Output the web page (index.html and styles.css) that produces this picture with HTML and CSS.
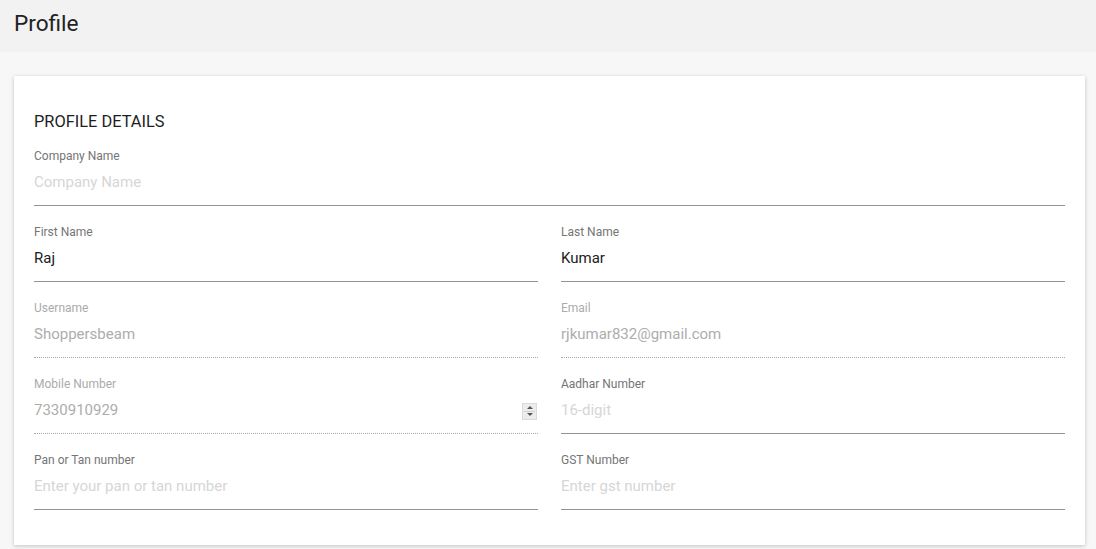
FILE: index.html
```html
<!DOCTYPE html>
<html>
<head>
<meta charset="utf-8">
<link rel="stylesheet" href="styles.css">
</head>
<body>
<header class="topbar"><h1 class="page-title">Profile</h1></header>
<main class="content">
  <section class="card">
    <h2 class="card-title">PROFILE DETAILS</h2>
    <div class="grid">
      <div class="field full">
        <label class="label">Company Name</label>
        <div class="control"><input class="input" placeholder="Company Name"></div>
      </div>
      <div class="field">
        <label class="label">First Name</label>
        <div class="control"><input class="input" value="Raj"></div>
      </div>
      <div class="field">
        <label class="label">Last Name</label>
        <div class="control"><input class="input" value="Kumar"></div>
      </div>
      <div class="field disabled">
        <label class="label">Username</label>
        <div class="control"><input class="input" value="Shoppersbeam" disabled></div>
      </div>
      <div class="field disabled">
        <label class="label">Email</label>
        <div class="control"><input class="input" value="rjkumar832@gmail.com" disabled></div>
      </div>
      <div class="field disabled">
        <label class="label">Mobile Number</label>
        <div class="control"><input class="input" value="7330910929" disabled><span class="spinner"><span class="arrow up"></span><span class="arrow down"></span></span></div>
      </div>
      <div class="field">
        <label class="label">Aadhar Number</label>
        <div class="control"><input class="input" placeholder="16-digit"></div>
      </div>
      <div class="field">
        <label class="label">Pan or Tan number</label>
        <div class="control"><input class="input" placeholder="Enter your pan or tan number"></div>
      </div>
      <div class="field">
        <label class="label">GST Number</label>
        <div class="control"><input class="input" placeholder="Enter gst number"></div>
      </div>
    </div>
  </section>
</main>
</body>
</html>
```
FILE: styles.css
```css
* { box-sizing: border-box; }
html, body { margin: 0; padding: 0; }
body {
  background: #f7f7f7;
  font-family: Roboto, "Liberation Sans", Arial, sans-serif;
  color: #212121;
  width: 1096px;
  height: 549px;
  overflow: hidden;
}
.topbar {
  height: 52px;
  background: #f2f2f2;
  padding: 0 14px;
  display: flex;
  align-items: center;
}
.page-title {
  margin: 0;
  font-size: 22.6px;
  font-weight: 400;
  line-height: 26px;
  color: #222;
  position: relative;
  top: -2px;
}
.content {
  padding: 24px 11px 0 14px;
}
.card {
  background: #fff;
  box-shadow: 0 1px 4px rgba(0,0,0,0.22);
  padding: 36px 20px 35px 20px;
}
.card-title {
  margin: 0 0 16px 0;
  font-size: 16.4px;
  font-weight: 400;
  line-height: 20px;
  color: #1d1d1d;
}
.grid {
  display: grid;
  grid-template-columns: 1fr 1fr;
  column-gap: 23px;
  row-gap: 18px;
}
.field.full { grid-column: 1 / span 2; }
.label {
  display: block;
  font-size: 12px;
  line-height: 16px;
  color: #757575;
}
.control {
  display: flex;
  align-items: center;
  height: 42px;
  padding: 8px 0 13px 0;
  border-bottom: 1px solid #949494;
}
.input {
  flex: 1;
  min-width: 0;
  border: 0;
  outline: none;
  background: transparent;
  padding: 0;
  margin: 0;
  font-family: inherit;
  font-size: 15px;
  line-height: 20px;
  height: 20px;
  color: #212121;
}
.input::placeholder { color: #d6d6d6; opacity: 1; }
.field.disabled .label { color: #ababab; }
.field.disabled .control { border-bottom: 1px dotted #a8a8a8; }
.field.disabled .input { color: #adadad; -webkit-text-fill-color: #adadad; }
.spinner {
  width: 15px;
  height: 17px;
  margin-right: 1px;
  background: #ececec;
  border: 1px solid #dadada;
  display: flex;
  flex-direction: column;
  align-items: center;
  justify-content: space-around;
  position: relative;
  top: 1px;
}
.spinner::after {
  content: "";
  position: absolute;
  left: 1px;
  right: 1px;
  top: 7px;
  border-top: 1px solid #d0d0d0;
}
.arrow {
  width: 0;
  height: 0;
  border-left: 3px solid transparent;
  border-right: 3px solid transparent;
}
.arrow.up { border-bottom: 3px solid #555; }
.arrow.down { border-top: 3px solid #555; }
```
